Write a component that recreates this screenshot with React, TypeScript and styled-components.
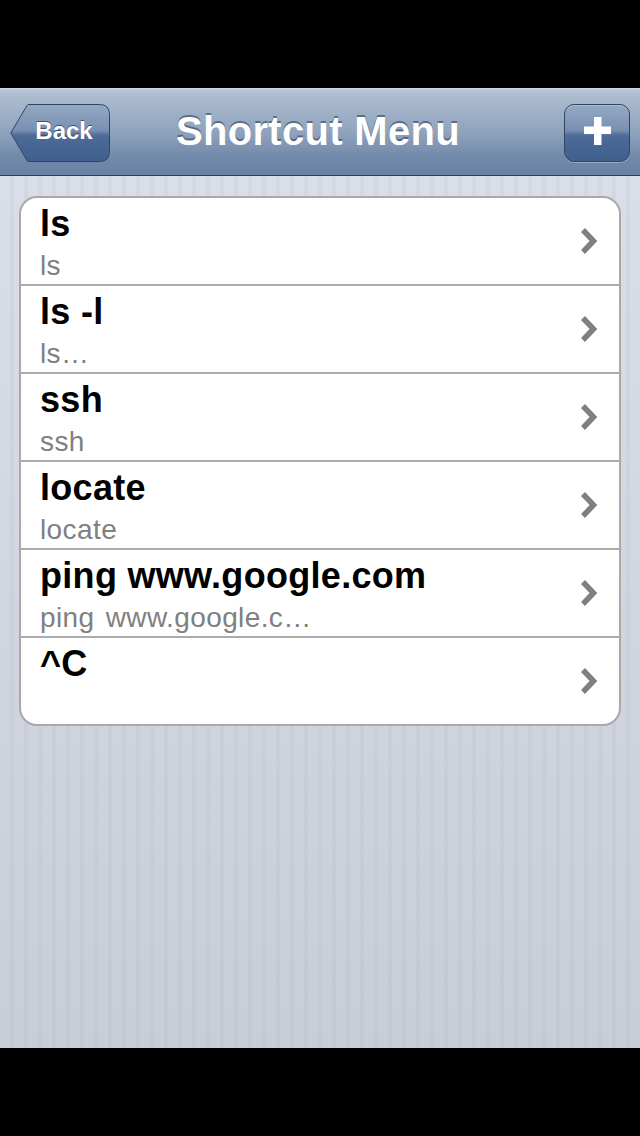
import React from 'react';
import styled, {createGlobalStyle} from 'styled-components';

const GlobalStyle = createGlobalStyle`
  html, body {
    margin: 0;
    padding: 0;
    background: #000;
  }

  body {
    font-family: "Liberation Sans", Arial, sans-serif;
  }
`

const Screen = styled.div`
  width: 640px;
  height: 1136px;
  display: flex;
  flex-direction: column;
  background: #000;
`

const StatusArea = styled.div`
  height: 88px;
  flex-shrink: 0;
  background: #000;
`

const NavBar = styled.header`
  height: 86px;
  flex-shrink: 0;
  display: grid;
  grid-template-columns: 1fr auto 1fr;
  align-items: center;
  padding: 0 10px;
  background: linear-gradient(to bottom, #c1ccdb 0%, #b0bfd1 4%, #8fa3bd 50%, #7189aa 80%, #6982a4 100%);
  border-top: 1px solid #cdd6e2;
  border-bottom: 1px solid #2e3d55;
`

const Title = styled.h1`
  margin: 0 4px 2px 0;
  font-size: 40px;
  font-weight: bold;
  color: #fff;
  letter-spacing: 0.3px;
  text-shadow: 0 -2px 0 rgba(40, 55, 80, 0.55);
`

const BackButton = styled.button`
  justify-self: start;
  position: relative;
  width: 100px;
  height: 58px;
  margin-top: 1px;
  padding: 0 0 4px 8px;
  border: none;
  background: none;
  font-family: "Liberation Sans", Arial, sans-serif;
  font-size: 24px;
  font-weight: bold;
  color: #fff;
  text-shadow: 0 -1px 0 rgba(20, 30, 50, 0.6);

  svg {
    position: absolute;
    left: 0;
    top: 0;
  }

  span {
    position: relative;
  }
`

const AddButton = styled.button`
  justify-self: end;
  width: 66px;
  height: 58px;
  margin-top: 1px;
  display: flex;
  align-items: center;
  justify-content: center;
  border-radius: 10px;
  border: 1px solid #2f4566;
  background: linear-gradient(to bottom, #95a9c3 0%, #7890b1 45%, #4d6b97 55%, #3f5f8e 100%);
  box-shadow: 0 1px 0 rgba(255, 255, 255, 0.3), inset 0 1px 0 rgba(255, 255, 255, 0.25);

  svg {
    margin-bottom: 3px;
  }
`

const Content = styled.main`
  flex: 1;
  padding: 20px 19px;
  background:
    repeating-linear-gradient(to right, rgba(255, 255, 255, 0) 0px, rgba(255, 255, 255, 0) 10px, rgba(120, 130, 155, 0.07) 10px, rgba(120, 130, 155, 0.07) 14px),
    linear-gradient(to bottom, #dadee7 0%, #c9cdd7 100%);
`

const Card = styled.ul`
  list-style: none;
  margin: 0;
  padding: 0;
  background: #fff;
  border: 2px solid #a9a9a9;
  border-radius: 18px;
  overflow: hidden;
`

const Row = styled.li`
  height: 86px;
  display: flex;
  align-items: center;
  padding: 0 20px 0 19px;
  border-top: ${(props: { first?: boolean }) => props.first ? 'none' : '2px solid #ababab'};
`

const RowText = styled.div`
  flex: 1;
  align-self: stretch;
  display: flex;
  flex-direction: column;
  padding-top: 6px;
  overflow: hidden;
`

const RowTitle = styled.div`
  font-size: 36px;
  line-height: 40px;
  font-weight: bold;
  color: #000;
  letter-spacing: 0.3px;
  white-space: nowrap;
`

const RowSubtitle = styled.div`
  margin-top: 6px;
  font-size: 28px;
  line-height: 32px;
  color: #808080;
  letter-spacing: 0.4px;
  word-spacing: 3px;
  white-space: nowrap;
`

const Chevron = () => (
    <svg width="20" height="28" viewBox="0 0 20 28">
        <path d="M4 3 L14.5 14 L4 25" fill="none" stroke="#7f7f7f" strokeWidth={5.5} strokeLinejoin="miter"/>
    </svg>
)

const shortcuts = [
    {title: 'ls', command: 'ls'},
    {title: 'ls -l', command: 'ls\u2026'},
    {title: 'ssh', command: 'ssh'},
    {title: 'locate', command: 'locate'},
    {title: 'ping www.google.com', command: 'ping www.google.c\u2026'},
    {title: '^C', command: ''},
];

const App = () => {
    return (
        <Screen>
            <GlobalStyle/>
            <StatusArea/>
            <NavBar>
                <BackButton>
                    <svg width="100" height="58" viewBox="0 0 100 58">
                        <defs>
                            <linearGradient id="backFill" x1="0" y1="0" x2="0" y2="1">
                                <stop offset="0" stopColor="#95a9c3"/>
                                <stop offset="0.45" stopColor="#7890b1"/>
                                <stop offset="0.55" stopColor="#4d6b97"/>
                                <stop offset="1" stopColor="#3f5f8e"/>
                            </linearGradient>
                        </defs>
                        <path d="M0.8 29 L17 1.5 Q17.5 0.5 19 0.5 L89.5 0.5 Q99.5 0.5 99.5 10.5 L99.5 47.5 Q99.5 57.5 89.5 57.5 L19 57.5 Q17.5 57.5 17 56.5 Z"
                              fill="url(#backFill)" stroke="#2f4566" strokeWidth={1}/>
                    </svg>
                    <span>Back</span>
                </BackButton>
                <Title>Shortcut Menu</Title>
                <AddButton aria-label="Add">
                    <svg width="27" height="28" viewBox="0 0 27 28">
                        <rect x="10" y="0" width="7.5" height="28" fill="#fff"/>
                        <rect x="0" y="9.5" width="27" height="7.5" fill="#fff"/>
                    </svg>
                </AddButton>
            </NavBar>
            <Content>
                <Card>
                    {shortcuts.map((s, i) => (
                        <Row key={s.title} first={i === 0}>
                            <RowText>
                                <RowTitle>{s.title}</RowTitle>
                                <RowSubtitle>{s.command}</RowSubtitle>
                            </RowText>
                            <Chevron/>
                        </Row>
                    ))}
                </Card>
            </Content>
            <StatusArea/>
        </Screen>
    )
}

export default App;
